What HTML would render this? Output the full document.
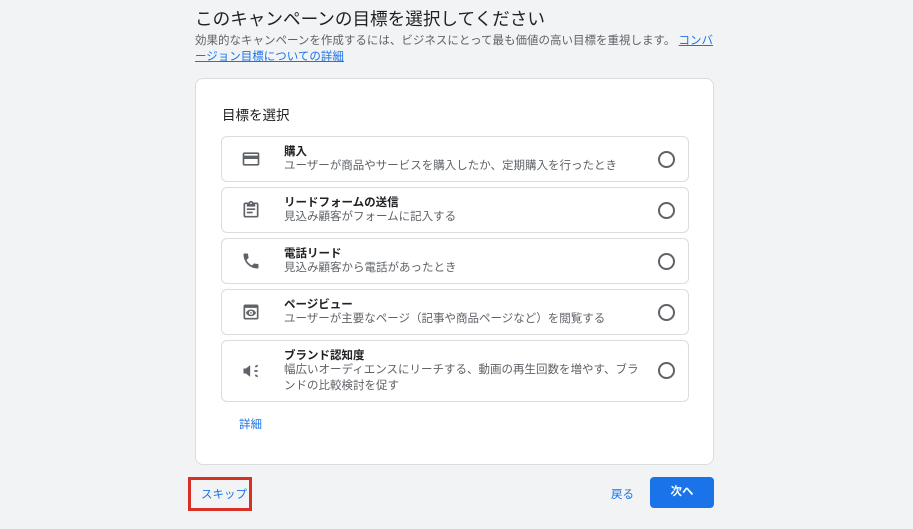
<!DOCTYPE html>
<html><head><meta charset="utf-8"><style>
*{margin:0;padding:0;box-sizing:border-box}
body{width:913px;height:529px;background:#f1f3f4;font-family:"Liberation Sans","Noto Sans CJK JP",sans-serif;position:relative;overflow:hidden;color:#202124}
.a{position:absolute}
.title{left:195px;top:6px;font-size:17.6px;color:#202124;white-space:nowrap}
.sub{left:195px;top:33px;width:520px;font-size:11.5px;line-height:16px;color:#5f6368}
.sub a{color:#1a73e8;text-decoration:underline}
.card{left:195px;top:78px;width:519px;height:387px;background:#fff;border:1px solid #dadce0;border-radius:8px}
.h{left:222px;top:104px;font-size:13.5px}
.row{left:221px;width:468px;background:#fff;border:1px solid #dadce0;border-radius:6px}
.row .t{position:absolute;left:62px;font-size:11.5px;font-weight:bold;color:#202124}
.row .d{position:absolute;left:62px;font-size:11.5px;color:#5f6368;line-height:16px;width:365px}
.row .r{position:absolute;left:436px;width:17px;height:17px;border:2px solid #5f6368;border-radius:50%}
.row svg{position:absolute;left:19px}
</style></head><body>
<div class="a title">このキャンペーンの目標を選択してください</div>
<div class="a sub">効果的なキャンペーンを作成するには、ビジネスにとって最も価値の高い目標を重視します。 <a>コンバージョン目標についての詳細</a></div>
<div class="a card"></div>
<div class="a h">目標を選択</div>

<div class="a row" style="top:136px;height:46px"><svg width="20" height="20" viewBox="0 0 24 24" style="top:12px"><path fill="#5f6368" d="M20 4H4c-1.1 0-2 .9-2 2v12c0 1.1.9 2 2 2h16c1.1 0 2-.9 2-2V6c0-1.1-.9-2-2-2zm0 14H4v-6h16v6zm0-10H4V6h16v2z"/></svg><div class="t" style="top:6px">購入</div><div class="d" style="top:21px">ユーザーが商品やサービスを購入したか、定期購入を行ったとき</div><div class="r" style="top:14px"></div></div>

<div class="a row" style="top:187px;height:46px"><svg width="20" height="20" viewBox="0 0 24 24" style="top:12px"><path fill="#5f6368" d="M19 3h-4.18C14.4 1.84 13.3 1 12 1s-2.4.84-2.82 2H5c-1.1 0-2 .9-2 2v14c0 1.1.9 2 2 2h14c1.1 0 2-.9 2-2V5c0-1.1-.9-2-2-2zm-7 0c.55 0 1 .45 1 1s-.45 1-1 1-1-.45-1-1 .45-1 1-1zm7 16H5V5h2v3h10V5h2v14zM7 10h10v2H7zm0 4h7v2H7z"/></svg><div class="t" style="top:6px">リードフォームの送信</div><div class="d" style="top:21px">見込み顧客がフォームに記入する</div><div class="r" style="top:14px"></div></div>

<div class="a row" style="top:238px;height:46px"><svg width="20" height="20" viewBox="0 0 24 24" style="top:12px"><path fill="#5f6368" d="M20 15.5c-1.25 0-2.45-.2-3.57-.57-.35-.11-.74-.03-1.02.24l-2.2 2.2c-2.83-1.44-5.15-3.75-6.59-6.59l2.2-2.21c.28-.26.36-.65.25-1C8.7 6.45 8.5 5.25 8.5 4c0-.55-.45-1-1-1H4c-.55 0-1 .45-1 1 0 9.39 7.61 17 17 17 .55 0 1-.45 1-1v-3.5c0-.55-.45-1-1-1z"/></svg><div class="t" style="top:6px">電話リード</div><div class="d" style="top:21px">見込み顧客から電話があったとき</div><div class="r" style="top:14px"></div></div>

<div class="a row" style="top:289px;height:46px"><svg width="20" height="20" viewBox="0 0 24 24" style="top:12px"><path fill="#5f6368" d="M19 3H5c-1.1 0-2 .9-2 2v14c0 1.1.9 2 2 2h14c1.1 0 2-.9 2-2V5c0-1.1-.9-2-2-2zm0 16H5V7h14v12zM12 9c-2.7 0-5 1.7-6 4 1 2.3 3.3 4 6 4s5-1.7 6-4c-1-2.3-3.3-4-6-4zm0 6.5c-1.4 0-2.5-1.1-2.5-2.5s1.1-2.5 2.5-2.5 2.5 1.1 2.5 2.5-1.1 2.5-2.5 2.5zm0-3.5c-.55 0-1 .45-1 1s.45 1 1 1 1-.45 1-1-.45-1-1-1z"/></svg><div class="t" style="top:6px">ページビュー</div><div class="d" style="top:21px">ユーザーが主要なページ（記事や商品ページなど）を閲覧する</div><div class="r" style="top:14px"></div></div>

<div class="a row" style="top:340px;height:62px"><svg width="20" height="20" viewBox="0 0 24 24" style="top:20px"><path fill="#5f6368" d="M3 9v6h3l5 4V5L6 9H3zm13 2h4v2h-4zm.6-4.8l3-1.8 1 1.7-3 1.8zM16.6 17.8l1-1.7 3 1.8-1 1.7z"/></svg><div class="t" style="top:6px">ブランド認知度</div><div class="d" style="top:21px">幅広いオーディエンスにリーチする、動画の再生回数を増やす、ブランドの比較検討を促す</div><div class="r" style="top:21px"></div></div>

<div class="a" style="left:239px;top:416px;font-size:11.5px;color:#1a73e8">詳細</div>
<div class="a" style="left:188px;top:477px;width:64px;height:34px;border:3px solid #d93025"></div>
<div class="a" style="left:201px;top:486px;font-size:11.5px;color:#1a73e8">スキップ</div>
<div class="a" style="left:611px;top:486px;font-size:11.5px;color:#1a73e8">戻る</div>
<div class="a" style="left:650px;top:477px;width:64px;height:31px;background:#1a73e8;border-radius:4px;color:#fff;font-size:11.5px;font-weight:bold;text-align:center;line-height:31px">次へ</div>
</body></html>
